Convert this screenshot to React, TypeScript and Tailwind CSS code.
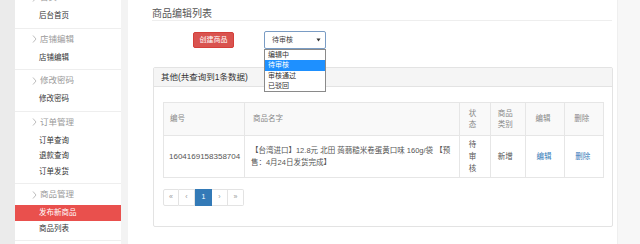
import React from "react";

const FONT = "font-['Liberation_Sans','Noto_Sans_CJK_SC',sans-serif]";

function Chevron() {
  return (
    <svg width="5" height="8" viewBox="0 0 5 8" className="shrink-0">
      <polyline points="1,0.5 4,4 1,7.5" fill="none" stroke="#b5b5b5" strokeWidth="0.9" />
    </svg>
  );
}

function Group({ title, items, active }: { title: string; items: string[]; active?: string }) {
  return (
    <div className="border-b border-[#eeeeee] pb-[4px]">
      <div className="h-[21px] flex items-center pl-[17px] text-[8.5px] text-[#9a9a9a]">
        <Chevron />
        <span className="ml-[3px]">{title}</span>
      </div>
      {items.map((it) => (
        <div
          key={it}
          className={
            it === active
              ? "h-[15.5px] flex items-center pl-[24px] text-[7.5px] bg-[#e9504d] text-white"
              : "h-[15.5px] flex items-center pl-[24px] text-[7.5px] text-[#333333]"
          }
        >
          {it}
        </div>
      ))}
    </div>
  );
}

export default function App() {
  return (
    <div className={`w-[640px] h-[244px] overflow-hidden flex bg-[#f7f7f7] ${FONT}`}>
      <div className="w-[15px] h-full bg-[#ebebeb]" />
      <div className="w-[106px] h-full bg-white overflow-hidden">
        <div className="-mt-[13px]">
          <Group title="首页" items={["后台首页"]} />
          <Group title="店铺编辑" items={["店铺编辑"]} />
          <Group title="修改密码" items={["修改密码"]} />
          <Group title="订单管理" items={["订单查询", "退款查询", "订单发货"]} />
          <Group title="商品管理" items={["发布新商品", "商品列表"]} active="发布新商品" />
        </div>
      </div>
      <div className="w-[7px] h-full bg-[#f3f3f3]" />
      <div className="w-[490px] h-full bg-white flex flex-col pl-[24px] pr-[5px] border-r border-[#efefef]">
        <div className="mt-[8px] h-[13px] leading-[11px] text-[10px] text-[#555555] border-b border-[#eeeeee]">
          商品编辑列表
        </div>
        <div className="mt-[10px] flex items-start">
          <div className="ml-[41px] mt-[1px] w-[41px] h-[16px] rounded-[2px] bg-[#d9534f] border border-[#d43f3a] text-white text-[7px] flex items-center justify-center">
            创建商品
          </div>
          <div className="relative ml-[30px] w-[62px] h-[18px]">
            <div className="w-full h-full border border-[#7a9cc4] rounded-[2px] bg-white flex items-center pl-[7px] pr-[4px] text-[7px] text-[#444444]">
              <span className="flex-1">待审核</span>
              <svg width="5" height="4" viewBox="0 0 5 4">
                <polygon points="0.5,0.5 4.5,0.5 2.5,3.5" fill="#333" />
              </svg>
            </div>
            <div className="absolute left-0 top-full w-[62px] border border-[#8a8a8a] bg-white text-[7px] text-[#333333] z-10">
              <div className="h-[10px] leading-[10px] pl-[3px]">编辑中</div>
              <div className="h-[10.5px] leading-[10.5px] pl-[3px] bg-[#1e90ff] text-white">待审核</div>
              <div className="h-[10.5px] leading-[10.5px] pl-[3px]">审核通过</div>
              <div className="h-[10px] leading-[10px] pl-[3px]">已驳回</div>
            </div>
          </div>
        </div>
        <div className="mt-[18px] ml-[1px] w-[460px] border border-[#e3e3e3] rounded-[2px]">
          <div className="h-[19px] bg-[#f5f5f5] border-b border-[#e3e3e3] flex items-center pl-[7px] text-[8.5px] text-[#333333]">
            其他(共查询到1条数据)
          </div>
          <div className="pt-[15px] pb-[20px] pl-[9px] pr-[8px]">
            <table className="border-collapse w-[441px] text-[7.5px] text-[#555555]">
              <thead>
                <tr className="h-[33px] bg-[#f9f9f9] text-[#888888]">
                  <th className="w-[81px] border border-[#e6e6e6] text-left font-normal pl-[6px]">编号</th>
                  <th className="w-[215px] border border-[#e6e6e6] text-left font-normal pl-[8px]">商品名字</th>
                  <th className="w-[31px] border border-[#e6e6e6] text-left font-normal pl-[9px] leading-[11px]">状<br />态</th>
                  <th className="w-[36px] border border-[#e6e6e6] text-left font-normal pl-[7px] leading-[11px]">商品<br />类别</th>
                  <th className="w-[39px] border border-[#e6e6e6] text-left font-normal pl-[9px]">编辑</th>
                  <th className="w-[39px] border border-[#e6e6e6] text-left font-normal pl-[9px]">删除</th>
                </tr>
              </thead>
              <tbody>
                <tr className="h-[42px]">
                  <td className="border border-[#e6e6e6] pl-[5px] text-[8px]">1604169158358704</td>
                  <td className="border border-[#e6e6e6] pl-[6px] leading-[12px] whitespace-nowrap">
                    【台湾进口】12.8元 北田 蒟蒻糙米卷蛋黄口味 160g/袋 【预
                    <br />
                    售：4月24日发货完成】
                  </td>
                  <td className="border border-[#e6e6e6] pl-[9px] leading-[12px]">待<br />审<br />核</td>
                  <td className="border border-[#e6e6e6] pl-[7px]">新增</td>
                  <td className="border border-[#e6e6e6] pl-[10px] text-[#337ab7]">编辑</td>
                  <td className="border border-[#e6e6e6] pl-[10px] text-[#337ab7]">删除</td>
                </tr>
              </tbody>
            </table>
            <div className="mt-[11px] flex text-[7px] text-[#999999]">
              <div className="w-[16px] h-[17px] border border-[#e3e3e3] rounded-l-[2px] flex items-center justify-center">«</div>
              <div className="w-[16px] h-[17px] border border-l-0 border-[#e3e3e3] flex items-center justify-center">‹</div>
              <div className="w-[17px] h-[17px] bg-[#337ab7] border border-[#337ab7] text-white flex items-center justify-center">1</div>
              <div className="w-[16px] h-[17px] border border-l-0 border-[#e3e3e3] flex items-center justify-center">›</div>
              <div className="w-[16px] h-[17px] border border-l-0 border-[#e3e3e3] rounded-r-[2px] flex items-center justify-center">»</div>
            </div>
          </div>
        </div>
      </div>
    </div>
  );
}
